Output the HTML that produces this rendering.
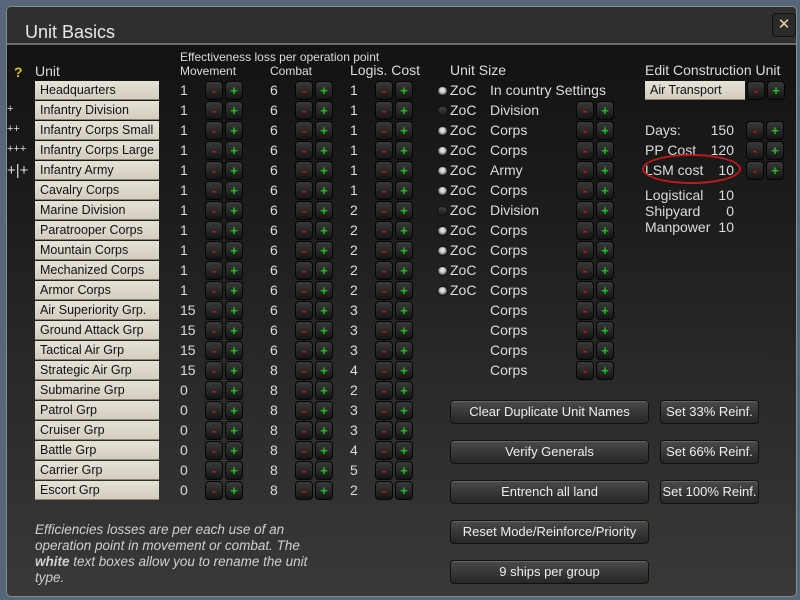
<!DOCTYPE html>
<html><head><meta charset="utf-8"><style>
*{margin:0;padding:0;box-sizing:border-box}
body{width:800px;height:600px;overflow:hidden;background:#56677c;font-family:"Liberation Sans",sans-serif;color:#dcdcdc;font-size:14px;position:relative}
#p{position:absolute;left:6px;top:6px;width:791px;height:591px;border:1px solid #8a8a8a;border-radius:5px;background:linear-gradient(to bottom,#121212 0px,#141414 60px,#1c1c1c 200px,#2a2a2a 380px,#393938 591px);overflow:hidden}
#tb{position:absolute;left:0;top:0;width:100%;height:38px;background:#2f2f2f;border-bottom:2px solid #6a6a6a}
.a{position:absolute;white-space:nowrap}
.n{position:absolute;left:28px;width:124px;height:19px;background:linear-gradient(#e6e2d6,#d2cdbf);color:#111;padding-left:5px;line-height:19px;font-size:12.5px;border-bottom:1px solid #8a8470}
.b{position:absolute;width:18px;height:19px;border-radius:4px;background:linear-gradient(#3a3a3a,#151515);border:1px solid #050505;text-align:center;line-height:17px;font-weight:bold;font-size:13px}
.m{color:#e01010}.pl{color:#20c020}
.r{position:absolute;width:11px;height:10px;border-radius:5px;background:radial-gradient(circle at 50% 40%,#ddd 30%,#777 60%,#222 90%);border:1px solid #111}
.r.off{background:linear-gradient(#444,#1a1a1a)}
.bt{position:absolute;height:24px;border-radius:4px;border:1px solid #111;background:linear-gradient(#4a4a4a,#262626);color:#eee;text-align:center;line-height:22px;font-size:13px;box-shadow:inset 0 1px 0 #666}
</style></head><body>
<div id="p">
<div id="tb"></div>
<div class="a" style="left:18px;top:15px;font-size:18px;color:#e8e8e8">Unit Basics</div>
<div class="a" style="left:765px;top:6px;width:24px;height:24px;border-radius:4px;background:#2a2a2a;border:1px solid #111;color:#e8d8a0;text-align:center;line-height:22px;font-size:15px">✕</div>
<div class="a" style="left:173px;top:43px;font-size:12px">Effectiveness loss per operation point</div>
<div class="a" style="left:7px;top:57px;color:#e0c020;font-weight:bold">?</div>
<div class="a" style="left:28px;top:56px">Unit</div>
<div class="a" style="left:173px;top:57px;font-size:12px">Movement</div>
<div class="a" style="left:263px;top:57px;font-size:12px">Combat</div>
<div class="a" style="left:343px;top:55px">Logis. Cost</div>
<div class="a" style="left:443px;top:55px">Unit Size</div>
<div class="a" style="left:638px;top:55px">Edit Construction Unit</div>
<div class="a" style="left:0;top:96px;font-size:11px">+</div>
<div class="a" style="left:0;top:116px;font-size:11px">++</div>
<div class="a" style="left:0;top:136px;font-size:11px">+++</div>
<div class="a" style="left:0;top:155px;font-size:15px">+|+</div>
<div id="rows" style="position:absolute;left:0;top:0"></div>
<div class="n" style="left:638px;top:74px;width:100px">Air Transport</div>
<div class="b m" style="left:740px;top:74px">-</div><div class="b pl" style="left:760px;top:74px">+</div>
<div class="a" style="left:638px;top:115px">Days:</div><div class="a" style="left:690px;top:115px;width:37px;text-align:right">150</div>
<div class="a" style="left:638px;top:135px">PP Cost</div><div class="a" style="left:690px;top:135px;width:37px;text-align:right">120</div>
<div class="a" style="left:638px;top:155px">LSM cost</div><div class="a" style="left:690px;top:155px;width:37px;text-align:right">10</div>
<div class="a" style="left:635px;top:147px;width:99px;height:30px;border:2px solid #c01818;border-radius:50%"></div>
<div class="b m" style="left:739px;top:114px">-</div><div class="b pl" style="left:759px;top:114px">+</div>
<div class="b m" style="left:739px;top:134px">-</div><div class="b pl" style="left:759px;top:134px">+</div>
<div class="b m" style="left:739px;top:154px">-</div><div class="b pl" style="left:759px;top:154px">+</div>
<div class="a" style="left:638px;top:180px">Logistical</div><div class="a" style="left:690px;top:180px;width:37px;text-align:right">10</div>
<div class="a" style="left:638px;top:196px">Shipyard</div><div class="a" style="left:690px;top:196px;width:37px;text-align:right">0</div>
<div class="a" style="left:638px;top:212px">Manpower</div><div class="a" style="left:690px;top:212px;width:37px;text-align:right">10</div>
<div class="bt" style="left:443px;top:393px;width:199px">Clear Duplicate Unit Names</div>
<div class="bt" style="left:653px;top:393px;width:99px">Set 33% Reinf.</div>
<div class="bt" style="left:443px;top:433px;width:199px">Verify Generals</div>
<div class="bt" style="left:653px;top:433px;width:99px">Set 66% Reinf.</div>
<div class="bt" style="left:443px;top:473px;width:199px">Entrench all land</div>
<div class="bt" style="left:653px;top:473px;width:99px">Set 100% Reinf.</div>
<div class="bt" style="left:443px;top:513px;width:199px">Reset Mode/Reinforce/Priority</div>
<div class="bt" style="left:443px;top:553px;width:199px">9 ships per group</div>
<div class="a" style="left:28px;top:515px;font-style:italic;white-space:normal;width:300px;line-height:16px;font-size:13.5px;color:#d0d0d0">Efficiencies losses are per each use of an operation point in movement or combat. The <b>white</b> text boxes allow you to rename the unit type.</div>
</div>
<script>
var names=["Headquarters","Infantry Division","Infantry Corps Small","Infantry Corps Large","Infantry Army","Cavalry Corps","Marine Division","Paratrooper Corps","Mountain Corps","Mechanized Corps","Armor Corps","Air Superiority Grp.","Ground Attack Grp","Tactical Air Grp","Strategic Air Grp","Submarine Grp","Patrol Grp","Cruiser Grp","Battle Grp","Carrier Grp","Escort Grp"];
var mv=[1,1,1,1,1,1,1,1,1,1,1,15,15,15,15,0,0,0,0,0,0];
var cb=[6,6,6,6,6,6,6,6,6,6,6,6,6,6,8,8,8,8,8,8,8];
var lg=[1,1,1,1,1,1,2,2,2,2,2,3,3,3,4,2,3,3,4,5,2];
var sz=["In country Settings","Division","Corps","Corps","Army","Corps","Division","Corps","Corps","Corps","Corps","Corps","Corps","Corps","Corps"];
var off=[1,6];
var h="";
function bb(x,y){return '<div class="b m" style="left:'+x+'px;top:'+y+'px">-</div><div class="b pl" style="left:'+(x+20)+'px;top:'+y+'px">+</div>';}
for(var i=0;i<21;i++){var y=74+i*20;
h+='<div class="n" style="top:'+y+'px">'+names[i]+'</div>';
h+='<div class="a" style="left:173px;top:'+(y+1)+'px">'+mv[i]+'</div>'+bb(198,y);
h+='<div class="a" style="left:263px;top:'+(y+1)+'px">'+cb[i]+'</div>'+bb(288,y);
h+='<div class="a" style="left:343px;top:'+(y+1)+'px">'+lg[i]+'</div>'+bb(368,y);
if(i<11){h+='<div class="r'+(off.indexOf(i)>=0?' off':'')+'" style="left:430px;top:'+(y+5)+'px"></div><div class="a" style="left:443px;top:'+(y+1)+'px">ZoC</div>';}
if(i<15){h+='<div class="a" style="left:483px;top:'+(y+1)+'px">'+sz[i]+'</div>';if(i>0)h+=bb(569,y);}
}
document.getElementById('rows').innerHTML=h;
</script>
</body></html>
